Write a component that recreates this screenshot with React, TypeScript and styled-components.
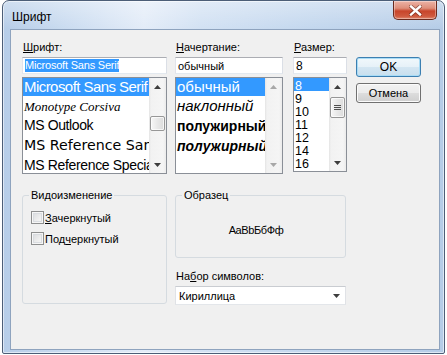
import React from "react";
import styled, { createGlobalStyle } from "styled-components";

const GlobalStyle = createGlobalStyle`
  html, body { margin: 0; padding: 0; background: #ffffff; }
  body { font-family: "Liberation Sans", Arial, sans-serif; color: #000; }
  * { box-sizing: border-box; }
`;

const Screen = styled.div`
  width: 447px;
  height: 355px;
  padding: 0 2px 1px 2px;
  display: flex;
  overflow: hidden;
`;

const Window = styled.div`
  flex: 1;
  display: flex;
  flex-direction: column;
  border: 1px solid #4c5e77;
  border-radius: 7px 7px 2px 2px;
  background:
    linear-gradient(180deg, rgba(255, 255, 255, 0.35) 0, rgba(255, 255, 255, 0) 28px),
    linear-gradient(90deg, #b6cde8 0%, #cfdff2 18%, #e3ecf8 32%, #d2e1f3 45%, #c3d7ee 70%, #b5cce7 100%);
  box-shadow: inset 0 0 0 1px rgba(255, 255, 255, 0.55);
`;

const TitleBar = styled.div`
  height: 28px;
  flex: none;
  display: flex;
  align-items: flex-start;
  padding-left: 9px;
`;

const Title = styled.div`
  margin-top: 9px;
  font-size: 12px;
  line-height: 14px;
`;

const CloseButton = styled.div`
  margin-left: auto;
  margin-right: 7px;
  width: 44px;
  height: 19px;
  border: 1px solid #6a2a1e;
  border-top: none;
  border-radius: 0 0 5px 5px;
  background: linear-gradient(180deg, #ecb3a6 0%, #de8e7a 40%, #c8452b 56%, #cf5a3f 85%, #e08a72 100%);
  box-shadow: inset 0 0 0 1px rgba(255, 255, 255, 0.35);
  display: flex;
  align-items: center;
  justify-content: center;
`;

const Client = styled.div`
  flex: 1;
  margin: 0 4px 3px 7px;
  border: 1px solid #8ea3be;
  background: #f0f0f0;
  padding: 11px 0 0 11px;
  display: flex;
  flex-direction: column;
`;

const TopRow = styled.div`
  display: flex;
  align-items: flex-start;
`;

const Column = styled.div<{ $w: number; $gap: number }>`
  width: ${(p) => p.$w}px;
  margin-right: ${(p) => p.$gap}px;
  flex: none;
  display: flex;
  flex-direction: column;
`;

const FieldLabel = styled.div<{ $top?: number }>`
  font-size: 11px;
  line-height: 13px;
  height: 13px;
  margin: ${(p) => p.$top ?? 0}px 0 3px 1px;
  white-space: nowrap;
`;

const EditBox = styled.div`
  height: 17px;
  border: 1px solid;
  border-color: #abadb3 #dbdfe6 #e3e9ef #e2e3ea;
  background: #fff;
  font-size: 11px;
  padding-left: 2px;
  display: flex;
  align-items: center;
  white-space: nowrap;
  overflow: hidden;
  margin-bottom: 3px;
`;

const Selection = styled.span`
  background: #3399ff;
  color: #fff;
  line-height: 13px;
  letter-spacing: -0.2px;
`;

const ListBox = styled.div<{ $h: number }>`
  height: ${(p) => p.$h}px;
  border: 1px solid #8a8f97;
  background: #fff;
  display: flex;
  overflow: hidden;
`;

const ListItems = styled.div`
  flex: 1;
  min-width: 0;
  overflow: hidden;
`;

const ListItem = styled.div<{ $h: number; $sel?: boolean }>`
  height: ${(p) => p.$h}px;
  line-height: ${(p) => p.$h}px;
  padding-left: 1px;
  white-space: nowrap;
  overflow: hidden;
  background: ${(p) => (p.$sel ? "#3399ff" : "transparent")};
  color: ${(p) => (p.$sel ? "#fff" : "#000")};
`;

const ItemText = styled.span<{
  $family?: string;
  $size: number;
  $italic?: boolean;
  $bold?: boolean;
  $ls?: number;
}>`
  font-family: ${(p) => p.$family ?? '"Liberation Sans", Arial, sans-serif'};
  font-size: ${(p) => p.$size}px;
  font-style: ${(p) => (p.$italic ? "italic" : "normal")};
  font-weight: ${(p) => (p.$bold ? 700 : 400)};
  letter-spacing: ${(p) => p.$ls ?? 0}px;
`;

const ScrollBar = styled.div`
  width: 17px;
  flex: none;
  display: flex;
  flex-direction: column;
  background: linear-gradient(90deg, #e4e4e4 0, #f2f2f2 2px, #f5f5f5 14px, #ebebeb 17px);
`;

const ScrollArrow = styled.div`
  height: 17px;
  flex: none;
  display: flex;
  align-items: center;
  justify-content: center;
`;

const Track = styled.div`
  flex: 1;
`;

const Thumb = styled.div<{ $top: number; $h: number }>`
  margin: ${(p) => p.$top}px 1px 0 1px;
  height: ${(p) => p.$h}px;
  border: 1px solid #979797;
  border-radius: 2px;
  background: linear-gradient(90deg, #f7f7f7, #e8e8e8 50%, #dcdcdc);
  box-shadow: inset 0 0 0 1px rgba(255, 255, 255, 0.7);
  display: flex;
  flex-direction: column;
  align-items: center;
  justify-content: center;
  gap: 1px;
`;

const Grip = styled.div`
  width: 7px;
  height: 1px;
  background: #4f4f4f;
`;

const ButtonCol = styled.div`
  width: 65px;
  flex: none;
  padding-top: 16px;
  display: flex;
  flex-direction: column;
  gap: 6px;
`;

const Button = styled.div<{ $default?: boolean }>`
  height: 20px;
  border: 1px solid ${(p) => (p.$default ? "#3c7fb1" : "#707070")};
  border-radius: 3px;
  background: ${(p) =>
    p.$default
      ? "linear-gradient(180deg, #f1f8fc 0%, #e6f1f8 50%, #d4e6f2 51%, #c8dfee 100%)"
      : "linear-gradient(180deg, #f2f2f2 0%, #ebebeb 50%, #dddddd 51%, #cfcfcf 100%)"};
  box-shadow: inset 0 0 0 1px ${(p) => (p.$default ? "#a9dcf6" : "#fbfbfb")};
  font-size: ${(p) => (p.$default ? 12 : 11)}px;
  display: flex;
  align-items: center;
  justify-content: center;
`;

const BottomRow = styled.div`
  display: flex;
  align-items: flex-start;
  margin-top: 15px;
`;

const Group = styled.fieldset<{ $w: number; $h: number }>`
  margin: 0;
  padding: 0 6px;
  width: ${(p) => p.$w}px;
  height: ${(p) => p.$h}px;
  border: 1px solid #d5dbe0;
  border-radius: 3px;
  min-width: 0;
  flex: none;
`;

const Legend = styled.legend`
  padding: 0 2px;
  font-size: 11px;
  line-height: 13px;
`;

const CheckRow = styled.div<{ $top: number }>`
  display: flex;
  align-items: center;
  gap: 1px;
  height: 13px;
  margin: ${(p) => p.$top}px 0 0 2px;
  font-size: 11px;
`;

const CheckBox = styled.div`
  width: 13px;
  height: 13px;
  border: 1px solid #8e8f8f;
  background: linear-gradient(135deg, #d6d8db 0%, #eeeeee 60%, #fbfbfb 100%);
  box-shadow: inset 0 0 0 1px #f6f6f6, inset 0 0 0 2px #d9dce0;
  flex: none;
`;

const RightCol = styled.div`
  width: 171px;
  margin-left: 8px;
  flex: none;
  display: flex;
  flex-direction: column;
`;

const SampleText = styled.div`
  height: 55px;
  display: flex;
  align-items: center;
  justify-content: center;
  padding-right: 9px;
  font-size: 11px;
  letter-spacing: -0.4px;
`;

const SelectBox = styled.div`
  height: 19px;
  border: 1px solid;
  border-color: #c9ccd1 #e0e2e6 #e3e6ea #e0e2e6;
  background: #fff;
  display: flex;
  align-items: center;
  padding: 0 5px 0 3px;
  font-size: 11px;
`;

const SelectValue = styled.span`
  flex: 1;
`;

function Arrow({ dir, disabled }: { dir: "up" | "down"; disabled?: boolean }) {
  const pts = dir === "up" ? "0,4 3.5,0 7,4" : "0,0 7,0 3.5,4";
  return (
    <svg width="7" height="4" viewBox="0 0 7 4">
      <polygon points={pts} fill={disabled ? "#a8a8a8" : "#3d3d3d"} />
    </svg>
  );
}

function Scroll({
  thumb,
  disabled,
}: {
  thumb?: { top: number; h: number; grip?: boolean };
  disabled?: boolean;
}) {
  return (
    <ScrollBar>
      <ScrollArrow>
        <Arrow dir="up" disabled={disabled} />
      </ScrollArrow>
      <Track>
        {thumb && (
          <Thumb $top={thumb.top} $h={thumb.h}>
            {thumb.grip && (
              <>
                <Grip />
                <Grip />
                <Grip />
              </>
            )}
          </Thumb>
        )}
      </Track>
      <ScrollArrow>
        <Arrow dir="down" disabled={disabled} />
      </ScrollArrow>
    </ScrollBar>
  );
}

const fonts = [
  { name: "Microsoft Sans Serif", h: 18, size: 15, ls: -0.55 },
  { name: "Monotype Corsiva", h: 19, size: 13, italic: true, family: '"Liberation Serif", serif' },
  { name: "MS Outlook", h: 20, size: 14, ls: -0.4 },
  { name: "MS Reference Sans Serif", h: 20, size: 14.2, family: '"DejaVu Sans", sans-serif' },
  { name: "MS Reference Specialty", h: 20, size: 14, ls: -0.35 },
];

const styles = [
  { name: "обычный", h: 18, size: 15 },
  { name: "наклонный", h: 20, size: 15, italic: true },
  { name: "полужирный", h: 20, size: 14, bold: true },
  { name: "полужирный", h: 20, size: 14, bold: true, italic: true },
];

const sizes = ["8", "9", "10", "11", "12", "14", "16"];

export default function App() {
  return (
    <>
      <GlobalStyle />
      <Screen>
        <Window>
          <TitleBar>
            <Title>Шрифт</Title>
            <CloseButton>
              <svg width="13" height="11" viewBox="0 0 13 11">
                <path d="M2 1.5 L11 9.5 M11 1.5 L2 9.5" stroke="#5a1d12" strokeWidth="4" strokeLinecap="square" opacity="0.55" />
                <path d="M2 1.5 L11 9.5 M11 1.5 L2 9.5" stroke="#ffffff" strokeWidth="2.4" strokeLinecap="square" />
              </svg>
            </CloseButton>
          </TitleBar>
          <Client>
            <TopRow>
              <Column $w={145} $gap={8}>
                <FieldLabel>
                  <u>Ш</u>рифт:
                </FieldLabel>
                <EditBox>
                  <Selection>Microsoft Sans Serif</Selection>
                </EditBox>
                <ListBox $h={97}>
                  <ListItems>
                    {fonts.map((f, i) => (
                      <ListItem key={f.name} $h={f.h} $sel={i === 0}>
                        <ItemText $size={f.size} $italic={f.italic} $family={f.family} $ls={f.ls}>
                          {f.name}
                        </ItemText>
                      </ListItem>
                    ))}
                  </ListItems>
                  <Scroll thumb={{ top: 21, h: 15 }} />
                </ListBox>
              </Column>
              <Column $w={108} $gap={10}>
                <FieldLabel>
                  <u>Н</u>ачертание:
                </FieldLabel>
                <EditBox>обычный</EditBox>
                <ListBox $h={97}>
                  <ListItems>
                    {styles.map((s, i) => (
                      <ListItem key={i} $h={s.h} $sel={i === 0}>
                        <ItemText $size={s.size} $italic={s.italic} $bold={s.bold}>
                          {s.name}
                        </ItemText>
                      </ListItem>
                    ))}
                  </ListItems>
                  <Scroll disabled />
                </ListBox>
              </Column>
              <Column $w={54} $gap={9}>
                <FieldLabel>
                  <u>Р</u>азмер:
                </FieldLabel>
                <EditBox>
                  <ItemText $size={12}>8</ItemText>
                </EditBox>
                <ListBox $h={95}>
                  <ListItems>
                    {sizes.map((s, i) => (
                      <ListItem key={s} $h={13} $sel={i === 0}>
                        <ItemText $size={12.5}>{s}</ItemText>
                      </ListItem>
                    ))}
                  </ListItems>
                  <Scroll thumb={{ top: 2, h: 21, grip: true }} />
                </ListBox>
              </Column>
              <ButtonCol>
                <Button $default>OK</Button>
                <Button>Отмена</Button>
              </ButtonCol>
            </TopRow>
            <BottomRow>
              <Group $w={145} $h={115}>
                <Legend>Видоизменение</Legend>
                <CheckRow $top={9}>
                  <CheckBox />
                  <span>
                    <u>З</u>ачеркнутый
                  </span>
                </CheckRow>
                <CheckRow $top={8}>
                  <CheckBox />
                  <span>
                    Под<u>ч</u>еркнутый
                  </span>
                </CheckRow>
              </Group>
              <RightCol>
                <Group $w={171} $h={69}>
                  <Legend>Образец</Legend>
                  <SampleText>AaBbБбФф</SampleText>
                </Group>
                <FieldLabel $top={12}>
                  На<u>б</u>ор символов:
                </FieldLabel>
                <SelectBox>
                  <SelectValue>Кириллица</SelectValue>
                  <Arrow dir="down" />
                </SelectBox>
              </RightCol>
            </BottomRow>
          </Client>
        </Window>
      </Screen>
    </>
  );
}
